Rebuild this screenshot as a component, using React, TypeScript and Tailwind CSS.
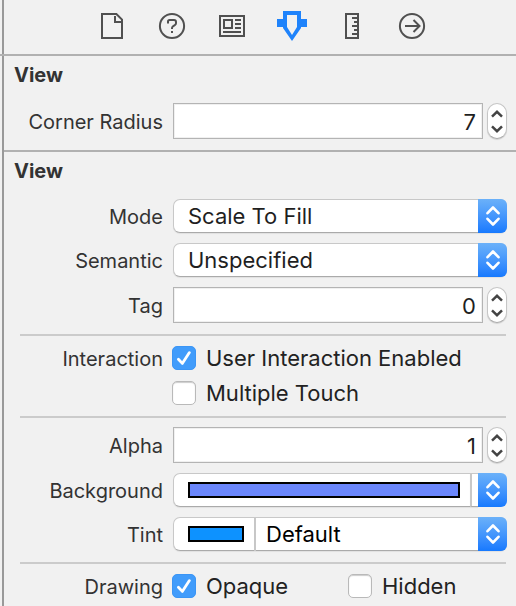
import { useId, useState, type ReactNode } from "react";

function Chevrons({ className }: { className: string }) {
  return (
    <svg viewBox="0 0 14 20" className={className} fill="none" stroke="currentColor" strokeWidth="2.6" strokeLinecap="round" strokeLinejoin="round" aria-hidden="true">
      <path d="M1.5 7.2 7 1.5 12.5 7.2M1.5 12.8 7 18.5 12.5 12.8" />
    </svg>
  );
}

function Row({ label, htmlFor, children }: { label: string; htmlFor?: string; children: ReactNode }) {
  return (
    <div className="flex items-center">
      <label htmlFor={htmlFor} className="mr-2.5 w-[159px] shrink-0 pt-0.5 text-right text-[20px] leading-7 text-[#333]">
        {label}
      </label>
      <div className="flex min-w-0 flex-1 items-center">{children}</div>
    </div>
  );
}

function NumberRow({ label, initial }: { label: string; initial: number }) {
  const id = useId();
  const [value, setValue] = useState(String(initial));
  const step = (by: number) => setValue(String((Number(value) || 0) + by));
  return (
    <Row label={label} htmlFor={id}>
      <input
        id={id}
        inputMode="numeric"
        value={value}
        onChange={(e) => setValue(e.target.value)}
        className="h-9 min-w-0 flex-1 border border-[#b4b4b4] bg-white pr-1.5 pt-0.5 text-right text-[22px] text-[#1f1f1f] shadow-[inset_0_0_0_1px_#f0f0f0] outline-none"
      />
      <div className="ml-1 flex h-9 w-5 shrink-0 flex-col rounded-full border border-[#c6c6c6] border-b-[#aaa] bg-white text-[#444] shadow-[0_1px_1px_#0002]">
        <button type="button" aria-label={`Increase ${label}`} onClick={() => step(1)} className="flex flex-1 items-center justify-center pt-0.5">
          <svg viewBox="0 0 12 8" className="h-2 w-3" fill="none" stroke="currentColor" strokeWidth="2.5" aria-hidden="true">
            <path d="M1 6.6 6 1.8 11 6.6" />
          </svg>
        </button>
        <button type="button" aria-label={`Decrease ${label}`} onClick={() => step(-1)} className="flex flex-1 items-center justify-center pb-0.5">
          <svg viewBox="0 0 12 8" className="h-2 w-3" fill="none" stroke="currentColor" strokeWidth="2.5" aria-hidden="true">
            <path d="M1 1.4 6 6.2 11 1.4" />
          </svg>
        </button>
      </div>
    </Row>
  );
}

const boxStyle = "border border-[#c8c8c8] border-b-[#aaa] bg-white shadow-[0_1px_1px_#0001]";
const capStyle = "flex w-[29px] items-center justify-center rounded-r-[6px] bg-linear-to-b from-[#6bb1f9] to-[#1679fe] text-white";

function SelectRow({ label, options }: { label: string; options: string[] }) {
  const id = useId();
  return (
    <Row label={label} htmlFor={id}>
      <div className="relative h-[34px] flex-1">
        <select id={id} className={`h-full w-full appearance-none rounded-[7px] pl-3.5 pr-9 text-[22px] text-[#1f1f1f] outline-none ${boxStyle}`}>
          {options.map((o) => (
            <option key={o}>{o}</option>
          ))}
        </select>
        <span className={`pointer-events-none absolute inset-y-0 right-0 ${capStyle}`}>
          <Chevrons className="h-5 w-3.5" />
        </span>
      </div>
    </Row>
  );
}

function Check({ label, on = false }: { label: string; on?: boolean }) {
  return (
    <label className="-ml-px flex h-6 items-center text-[22px] leading-6 text-[#222]">
      <span className="mr-2.5 grid size-6 shrink-0">
        <input
          type="checkbox"
          defaultChecked={on}
          className="peer col-start-1 row-start-1 size-6 appearance-none rounded-[5px] border border-[#b9b9b9] bg-white shadow-[inset_0_1px_1px_#0003] checked:border-[#3b95f5] checked:bg-[#419cfb] checked:shadow-none"
        />
        <svg viewBox="0 0 24 24" className="pointer-events-none invisible col-start-1 row-start-1 size-6 peer-checked:visible" fill="none" stroke="#fff" strokeWidth="2.8" strokeLinecap="round" strokeLinejoin="round" aria-hidden="true">
          <path d="M6.4 13.2 10.3 17.4 17.4 6.6" />
        </svg>
      </span>
      {label}
    </label>
  );
}

function Divider() {
  return <hr className="mb-[9px] ml-4 mr-px mt-[11px] border-0 border-t-2 border-[#cbcbcb]" />;
}

function Heading({ children }: { children: ReactNode }) {
  return <h2 className="mb-[9px] pl-2.5 text-[20px] font-bold leading-[38px] text-[#333]">{children}</h2>;
}

const tabs: { name: string; icon: ReactNode }[] = [
  {
    name: "File",
    icon: (
      <>
        <path d="M5 3H19.4L25 8.6V27H5Z" />
        <path d="M18 5V11H24" />
      </>
    ),
  },
  {
    name: "Quick Help",
    icon: (
      <>
        <circle cx="15" cy="15" r="12.1" />
        <path d="M11 12.5V10.5Q11 9 12.5 9H17Q19 9 19 11V12.3Q19 13.5 17.8 14.2L16 15.3Q15 16 15 17.2V18M15 20V22" />
      </>
    ),
  },
  {
    name: "Identity",
    icon: (
      <>
        <path d="M3 5H27V25H3Z" />
        <path d="M7 9H15V17H7ZM18 9H24M18 13H24M18 17H24M6 21H24" />
      </>
    ),
  },
  {
    name: "Attributes",
    icon: <path fill="#1f83fb" stroke="none" fillRule="evenodd" d="M6 0H24V8H30V16H24V17L15 30 6 17V16H0V8H6ZM10 4V16L15 24 20 16V4Z" />,
  },
  {
    name: "Size",
    icon: <path d="M9 3H21V27H9ZM15 7H21M17 11H21M15 15H21M17 19H21M15 23H21" />,
  },
  {
    name: "Connections",
    icon: (
      <>
        <circle cx="15" cy="15" r="12.1" />
        <path d="M8 15H22M16.5 9 22.5 15 16.5 21" />
      </>
    ),
  },
];

export default function App() {
  const tint = useId();
  return (
    <div className="min-h-screen bg-[#f1f1f1] font-[Inter,'Liberation_Sans',sans-serif]">
      <div className="flex min-h-screen flex-col">
        <header className="border-b-2 border-[#b1b1b1]">
          <nav aria-label="Inspectors" className="ml-0.5 flex h-[54px] items-center justify-center border-l-2 border-[#999] pb-0.5 pl-1">
            {tabs.map((t) => (
              <button key={t.name} type="button" aria-label={t.name} className="flex w-[60px] justify-center text-[#505050]">
                <svg viewBox="0 0 30 30" className="size-[30px]" fill="none" stroke="currentColor" strokeWidth="2">
                  {t.icon}
                </svg>
              </button>
            ))}
          </nav>
        </header>

        <main className="ml-0.5 flex-1 border-l-2 border-[#999]">
          <section className="border-b-2 border-[#b1b1b1] pb-[11px] pr-[9px]">
            <Heading>View</Heading>
            <NumberRow label="Corner Radius" initial={7} />
          </section>

          <section className="pb-2 pr-[9px]">
            <Heading>View</Heading>
            <div className="flex flex-col gap-2.5">
              <SelectRow label="Mode" options={["Scale To Fill", "Aspect Fit", "Aspect Fill"]} />
              <SelectRow label="Semantic" options={["Unspecified", "Playback", "Spatial"]} />
              <NumberRow label="Tag" initial={0} />
            </div>
            <Divider />
            <div className="flex flex-col gap-[11px] pt-px">
              <div className="-my-[3px]">
                <Row label="Interaction">
                  <Check label="User Interaction Enabled" on />
                </Row>
              </div>
              <div className="ml-[169px]">
                <Check label="Multiple Touch" />
              </div>
            </div>
            <Divider />
            <div className="flex flex-col gap-2.5">
              <NumberRow label="Alpha" initial={1} />
              <Row label="Background">
                <div className="flex h-[34px] flex-1">
                  <button type="button" aria-label="Background colour" className={`flex flex-1 items-center rounded-l-[7px] border-r-0 pl-3.5 pr-2.5 ${boxStyle}`}>
                    <span className="h-4 flex-1 border-2 border-black bg-[#6b87fc]" />
                  </button>
                  <span className={`w-2 border-x-0 border-l-2 ${boxStyle}`} />
                  <button type="button" aria-label="Background colour list" className={capStyle}>
                    <Chevrons className="h-5 w-3.5" />
                  </button>
                </div>
              </Row>
              <Row label="Tint" htmlFor={tint}>
                <div className="flex h-[34px] flex-1">
                  <button type="button" aria-label="Tint colour" className={`flex w-[82px] items-center rounded-l-[7px] pl-3.5 ${boxStyle}`}>
                    <span className="h-4 w-14 border-2 border-black bg-[#0d92ff]" />
                  </button>
                  <div className="relative flex-1">
                    <select id={tint} className={`h-full w-full appearance-none rounded-r-[7px] pl-2.5 pr-9 text-[22px] text-black outline-none ${boxStyle}`}>
                      <option>Default</option>
                      <option>Black Color</option>
                    </select>
                    <span className={`pointer-events-none absolute inset-y-0 right-0 ${capStyle}`}>
                      <Chevrons className="h-5 w-3.5" />
                    </span>
                  </div>
                </div>
              </Row>
            </div>
            <Divider />
            <div className="pt-px">
              <div className="-my-[3px]">
                <Row label="Drawing">
                  <div className="w-44">
                    <Check label="Opaque" on />
                  </div>
                  <Check label="Hidden" />
                </Row>
              </div>
            </div>
          </section>
        </main>
      </div>
    </div>
  );
}
